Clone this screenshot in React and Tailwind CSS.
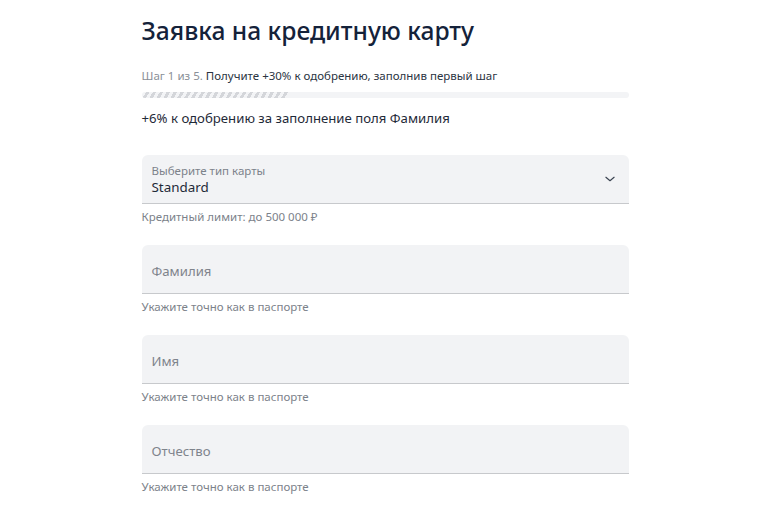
import React from 'react';

const font = { fontFamily: '"Noto Sans", "Open Sans", sans-serif' };

function Field({ placeholder, hint }) {
  return (
    <div>
      <div className="h-[49px] bg-[#f2f3f5] rounded-t-md border-b border-[#c7c9cc] flex items-center px-[10px] pt-[6px]">
        <span className="text-[13.2px] text-[#7f848c]">{placeholder}</span>
      </div>
      <p className="mt-[5px] h-[36px] text-[11.5px] leading-[16px] text-[#7c828a]">{hint}</p>
    </div>
  );
}

export default function App() {
  return (
    <div className="min-h-[512px] bg-white" style={font}>
      <div className="w-[487px] mx-auto pt-[13px]">
        {/* Header */}
        <h1 className="text-[24.6px] leading-[36px] font-medium text-[#14223a]">
          Заявка на кредитную карту
        </h1>
        <p className="mt-[19px] text-[11.5px] leading-[16px] text-[#8a8f97]">
          Шаг 1 из 5. <span className="text-[#2a3442]">Получите +30% к одобрению, заполнив первый шаг</span>
        </p>

        {/* Progress */}
        <div className="mt-[8px] h-[6px] rounded-full bg-[#f3f4f6] overflow-hidden">
          <div className="h-full w-[30%] bg-[repeating-linear-gradient(-60deg,transparent_0px,transparent_3px,#d4d6da_3px,#d4d6da_6px)]" />
        </div>

        <p className="mt-[10px] text-[13.2px] leading-[20px] text-[#1f2a38]">
          +6% к одобрению за заполнение поля Фамилия
        </p>

        {/* Card type select */}
        <div className="mt-[27px]">
          <div className="h-[49px] bg-[#f2f3f5] rounded-t-md border-b border-[#c7c9cc] flex items-center justify-between px-[10px]">
            <div className="flex flex-col">
              <span className="text-[11.5px] leading-[15px] text-[#7c828a]">Выберите тип карты</span>
              <span className="text-[13.4px] leading-[18px] text-[#1f2a38]">Standard</span>
            </div>
            <svg width="14" height="14" viewBox="0 0 24 24" fill="none" stroke="#3a4350" strokeWidth="2" strokeLinecap="round" strokeLinejoin="round" className="mr-[2px]">
              <path d="M5 9l7 6 7-6" />
            </svg>
          </div>
          <p className="mt-[5px] h-[36px] text-[11.5px] leading-[16px] text-[#7c828a]">Кредитный лимит: до 500 000 ₽</p>
        </div>

        <Field placeholder="Фамилия" hint="Укажите точно как в паспорте" />
        <Field placeholder="Имя" hint="Укажите точно как в паспорте" />
        <Field placeholder="Отчество" hint="Укажите точно как в паспорте" />
      </div>
    </div>
  );
}
